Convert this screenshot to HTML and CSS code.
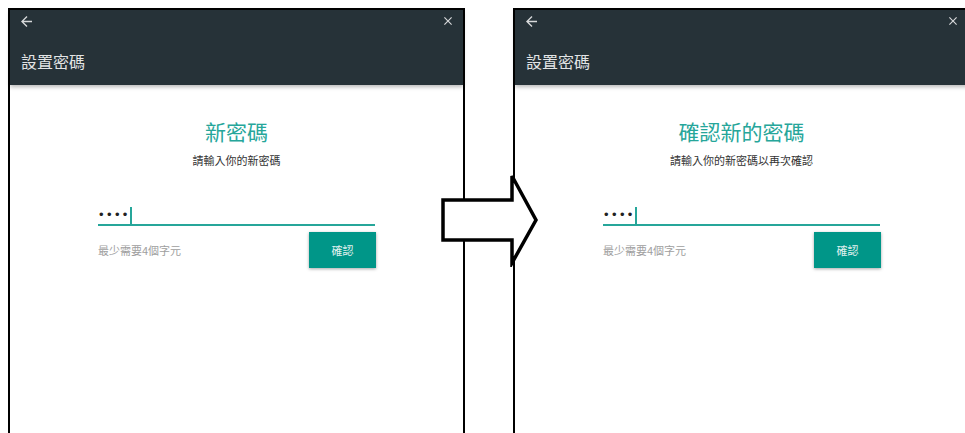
FILE: index.html
```html
<!DOCTYPE html>
<html lang="zh-Hant">
<head>
<meta charset="utf-8">
<title>設置密碼</title>
<link rel="stylesheet" href="styles.css">
</head>
<body>
<div class="stage">
  <section class="phone">
    <header class="appbar">
      <div class="appbar-top">
        <svg class="icon-back" viewBox="4 4 16 16" aria-hidden="true"><path d="M20 11H7.83l5.59-5.59L12 4l-8 8 8 8 1.41-1.41L7.83 13H20v-2z"/></svg>
        <svg class="icon-close" viewBox="5 5 14 14" aria-hidden="true"><path d="M19 6.41L17.59 5 12 10.59 6.41 5 5 6.41 10.59 12 5 17.59 6.41 19 12 13.41 17.59 19 19 17.59 13.41 12z"/></svg>
      </div>
      <h1 class="appbar-title">設置密碼</h1>
    </header>
    <main class="content">
      <h2 class="heading">新密碼</h2>
      <p class="sub">請輸入你的新密碼</p>
      <div class="field"><span class="dots">••••</span><span class="caret"></span></div>
      <div class="row">
        <span class="hint">最少需要4個字元</span>
        <button class="btn" type="button">確認</button>
      </div>
    </main>
  </section>
  <section class="phone">
    <header class="appbar">
      <div class="appbar-top">
        <svg class="icon-back" viewBox="4 4 16 16" aria-hidden="true"><path d="M20 11H7.83l5.59-5.59L12 4l-8 8 8 8 1.41-1.41L7.83 13H20v-2z"/></svg>
        <svg class="icon-close" viewBox="5 5 14 14" aria-hidden="true"><path d="M19 6.41L17.59 5 12 10.59 6.41 5 5 6.41 10.59 12 5 17.59 6.41 19 12 13.41 17.59 19 19 17.59 13.41 12z"/></svg>
      </div>
      <h1 class="appbar-title">設置密碼</h1>
    </header>
    <main class="content">
      <h2 class="heading">確認新的密碼</h2>
      <p class="sub">請輸入你的新密碼以再次確認</p>
      <div class="field"><span class="dots">••••</span><span class="caret"></span></div>
      <div class="row">
        <span class="hint">最少需要4個字元</span>
        <button class="btn" type="button">確認</button>
      </div>
    </main>
  </section>
  <svg class="flow-arrow" viewBox="0 0 100 95" aria-hidden="true">
    <polygon points="3,28 72,28 72,4 96,48 72,91 72,68 3,68"/>
  </svg>
</div>
</body>
</html>
```
FILE: styles.css
```css
html, body {
  margin: 0;
  height: 433px;
  overflow: hidden;
  background: #fff;
}
body {
  font-family: "Noto Sans CJK TC", "Noto Sans", sans-serif;
}
.stage {
  position: relative;
  display: flex;
  gap: 48px;
  padding: 8px 0 0 8px;
  width: 980px;
}
.phone {
  flex: none;
  width: 453px;
  height: 440px;
  border: 2px solid #000;
  border-bottom: none;
  background: #fff;
}
.appbar {
  position: relative;
  z-index: 1;
  height: 75px;
  box-sizing: border-box;
  padding: 0 11px;
  background: #263238;
  box-shadow: 0 2px 4px rgba(0, 0, 0, 0.28);
}
.appbar-top {
  height: 22px;
  display: flex;
  justify-content: space-between;
  align-items: center;
}
.icon-back {
  width: 11px;
  height: 11px;
  fill: #d7d9da;
}
.icon-close {
  width: 8px;
  height: 8px;
  fill: #d7d9da;
}
.appbar-title {
  margin: 17px 0 0;
  font-size: 16px;
  line-height: 24px;
  font-weight: 400;
  color: #e2e4e5;
}
.content {
  display: flex;
  flex-direction: column;
  align-items: center;
}
.heading {
  margin: 32px 0 0;
  font-size: 21px;
  line-height: 28px;
  font-weight: 400;
  color: #26a69a;
}
.sub {
  margin: 7px 0 0;
  font-size: 11px;
  line-height: 16px;
  color: #333;
}
.field {
  width: 277px;
  height: 18px;
  margin-top: 38px;
  border-bottom: 2px solid #26a69a;
  display: flex;
  align-items: center;
}
.dots {
  padding-left: 1px;
  font-family: "Liberation Sans", sans-serif;
  font-size: 13px;
  line-height: 18px;
  letter-spacing: 3.4px;
  color: #222;
}
.caret {
  width: 2px;
  height: 17px;
  margin-left: -1px;
  background: #26a69a;
}
.row {
  width: 277px;
  margin-top: 6px;
  display: flex;
  justify-content: space-between;
  align-items: center;
}
.hint {
  font-size: 11px;
  line-height: 16px;
  color: #9e9e9e;
}
.btn {
  width: 67px;
  height: 36px;
  margin-right: -1px;
  padding: 0;
  border: 0;
  background: #009688;
  color: #e3f2f0;
  font-family: "Noto Sans CJK TC", "Noto Sans", sans-serif;
  font-size: 11px;
  box-shadow: 0 1px 3px rgba(0, 0, 0, 0.35);
}
.flow-arrow {
  position: absolute;
  left: 440px;
  top: 172px;
  width: 100px;
  height: 95px;
  fill: #fff;
  stroke: #000;
  stroke-width: 3.5;
  stroke-linejoin: miter;
}
```
